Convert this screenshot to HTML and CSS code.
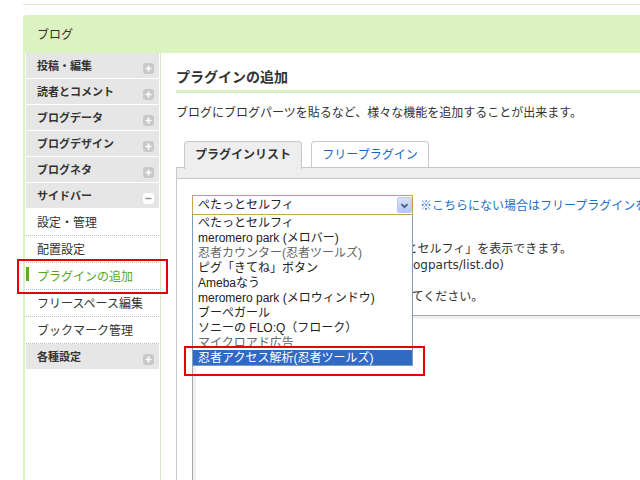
FILE: index.html
```html
<!DOCTYPE html>
<html lang="ja">
<head>
<meta charset="utf-8">
<title>プラグインの追加</title>
<link rel="stylesheet" href="styles.css">
</head>
<body>
<div class="topline"></div>
<div class="panel">
  <div class="panel-head">ブログ</div>
  <div class="panel-body">
    <nav class="side">
      <div class="cat">投稿・編集<svg class="tog" width="11" height="11" viewBox="0 0 11 11"><rect width="11" height="11" rx="3" fill="#c9c9c9"/><path d="M2.5 5.5h6M5.5 2.5v6" stroke="#fff" stroke-width="1.6"/></svg></div>
      <div class="cat">読者とコメント<svg class="tog" width="11" height="11" viewBox="0 0 11 11"><rect width="11" height="11" rx="3" fill="#c9c9c9"/><path d="M2.5 5.5h6M5.5 2.5v6" stroke="#fff" stroke-width="1.6"/></svg></div>
      <div class="cat">ブログデータ<svg class="tog" width="11" height="11" viewBox="0 0 11 11"><rect width="11" height="11" rx="3" fill="#c9c9c9"/><path d="M2.5 5.5h6M5.5 2.5v6" stroke="#fff" stroke-width="1.6"/></svg></div>
      <div class="cat">ブログデザイン<svg class="tog" width="11" height="11" viewBox="0 0 11 11"><rect width="11" height="11" rx="3" fill="#c9c9c9"/><path d="M2.5 5.5h6M5.5 2.5v6" stroke="#fff" stroke-width="1.6"/></svg></div>
      <div class="cat">ブログネタ<svg class="tog" width="11" height="11" viewBox="0 0 11 11"><rect width="11" height="11" rx="3" fill="#c9c9c9"/><path d="M2.5 5.5h6M5.5 2.5v6" stroke="#fff" stroke-width="1.6"/></svg></div>
      <div class="cat">サイドバー<svg class="tog" width="11" height="11" viewBox="0 0 11 11"><rect width="11" height="11" rx="3" fill="#fff"/><path d="M2.5 5.5h6" stroke="#8a8a8a" stroke-width="1.4"/></svg></div>
      <a class="sub">設定・管理</a>
      <a class="sub">配置設定</a>
      <a class="sub active">プラグインの追加</a>
      <a class="sub">フリースペース編集</a>
      <a class="sub">ブックマーク管理</a>
      <div class="cat">各種設定<svg class="tog" width="11" height="11" viewBox="0 0 11 11"><rect width="11" height="11" rx="3" fill="#c9c9c9"/><path d="M2.5 5.5h6M5.5 2.5v6" stroke="#fff" stroke-width="1.6"/></svg></div>
    </nav>
    <main class="main">
      <h1 class="title">プラグインの追加</h1>
      <p class="desc">ブログにブログパーツを貼るなど、様々な機能を追加することが出来ます。</p>
      <div class="tabs">
        <span class="tab on">プラグインリスト</span>
        <span class="tab">フリープラグイン</span>
      </div>
      <div class="tabpanel">
        <div class="strip"></div>
        <div class="tabbody">
          <div class="selrow">
            <div class="select">ぺたっとセルフィ<span class="arrow"><svg width="15" height="15" viewBox="0 0 15 15"><path d="M4 6l3.5 3.5L11 6" fill="none" stroke="#465a86" stroke-width="2"/></svg></span>
              <ul class="list">
                <li>ぺたっとセルフィ</li>
                <li>meromero park (メロバー)</li>
                <li class="dim">忍者カウンター(忍者ツールズ)</li>
                <li>ピグ「きてね」ボタン</li>
                <li>Amebaなう</li>
                <li>meromero park (メロウィンドウ)</li>
                <li>ブーペガール</li>
                <li>ソニーの FLO:Q（フローク）</li>
                <li class="dim">マイクロアド広告</li>
                <li class="sel">忍者アクセス解析(忍者ツールズ)</li>
              </ul>
            </div>
            <a class="note">※こちらにない場合はフリープラグインをご利用ください。</a>
          </div>
          <div class="info">
            <p>このプラグインを追加すると、「ぺたっとセルフィ」を表示できます。</p>
            <p>詳細はこちら(http://selfy.petatto.jp/blogparts/list.do)</p>
            <p class="gap">追加後は「配置設定」から位置を設定してください。</p>
          </div>
          <div class="preview"></div>
        </div>
      </div>
    </main>
  </div>
</div>
<div class="mark mark-side"></div>
<div class="mark mark-list"></div>
</body>
</html>
```
FILE: styles.css
```css
html, body {
  margin: 0;
  padding: 0;
  overflow: hidden;
}
body {
  width: 640px;
  height: 480px;
  position: relative;
  background: #fff;
  color: #333;
  font-family: "Liberation Sans", "Noto Sans CJK JP", sans-serif;
}
.topline {
  height: 1px;
  margin: 4px 0 0 23px;
  background: #dcefc6;
}
.panel {
  margin: 10px 0 0 23px;
  width: 680px;
}
.panel-head {
  height: 36px;
  line-height: 36px;
  padding: 2px 0 0 14px;
  font-size: 12px;
  color: #333;
  background: #dcf2c1;
  border-radius: 4px 0 0 0;
}
.panel-body {
  display: flex;
  height: 430px;
  border-left: 2px solid #dcf2c1;
}
.side {
  width: 133px;
  padding: 0 1px;
  border-right: 1px solid #d9ebc6;
  flex: none;
}
.cat {
  height: 23px;
  line-height: 23px;
  padding: 2px 5px 0 11px;
  border-bottom: 1px solid #fff;
  background: #e6e6e6;
  font-size: 11px;
  font-weight: bold;
  color: #333;
  display: flex;
  justify-content: space-between;
  align-items: center;
}
.tog {
  margin-top: 4px;
  display: block;
}
.sub {
  display: block;
  position: relative;
  height: 24px;
  line-height: 24px;
  padding: 2px 0 0 11px;
  border-bottom: 1px dotted #bdbdbd;
  font-size: 12px;
  color: #333;
}
.sub.active {
  color: #56a824;
}
.sub.active::before {
  content: "";
  position: absolute;
  left: 0;
  top: 4px;
  width: 3px;
  height: 14px;
  background: #5aab2c;
}
.main {
  flex: 1;
  padding: 14px 0 0 15px;
}
.title {
  margin: 0;
  font-size: 14px;
  font-weight: bold;
  line-height: 20px;
  padding-bottom: 3px;
  border-bottom: 3px solid #d9f0c2;
  color: #333;
}
.desc {
  margin: 12px 0 0;
  font-size: 12px;
  line-height: 16px;
}
.tabs {
  margin-top: 20px;
  padding-left: 8px;
  display: flex;
  gap: 9px;
  align-items: flex-start;
  height: 26px;
}
.tab {
  box-sizing: border-box;
  width: 118px;
  height: 26px;
  line-height: 26px;
  text-align: center;
  font-size: 12px;
  color: #1b67c6;
  background: #fff;
  border: 1px solid #c8c8c8;
  border-bottom: none;
  border-radius: 4px 4px 0 0;
}
.tab.on {
  height: 28px;
  background: #eee;
  color: #333;
  font-weight: bold;
  position: relative;
  z-index: 1;
}
.tabpanel {
  border-left: 1px solid #c8c8c8;
  border-top: 1px solid #c8c8c8;
}
.strip {
  height: 10px;
  background: #eee;
  border-bottom: 1px solid #c8c8c8;
}
.tabbody {
  padding: 16px 0 0 15px;
}
.selrow {
  display: flex;
  align-items: center;
  gap: 7px;
  white-space: nowrap;
}
.select {
  position: relative;
  box-sizing: border-box;
  width: 221px;
  height: 20px;
  line-height: 19px;
  padding-left: 5px;
  border: 1px solid #c9a14f;
  font-size: 12px;
  color: #222;
  background: #fff;
  flex: none;
}
.arrow {
  position: absolute;
  right: 0;
  top: 1px;
  width: 15px;
  height: 16px;
  box-sizing: border-box;
  border: 1px solid #b9c9f0;
  border-radius: 2px;
  background: linear-gradient(#d5e0fb, #b7c8f4);
  display: flex;
  align-items: center;
  justify-content: center;
}
.arrow svg {
  display: block;
}
.list {
  position: absolute;
  left: -1px;
  top: 18px;
  z-index: 2;
  box-sizing: border-box;
  width: 221px;
  margin: 0;
  padding: 0;
  list-style: none;
  background: #fff;
  border: 1px solid #7f9db9;
  border-top-color: #c9a14f;
}
.list li {
  height: 15px;
  line-height: 16px;
  padding-left: 5px;
  font-size: 12px;
  color: #222;
  white-space: nowrap;
}
.list li.dim {
  color: #666;
}
.list li.sel {
  background: #316ac5;
  color: #fff;
}
.note {
  font-size: 12px;
  line-height: 16px;
  padding-top: 1px;
  color: #1e6cc6;
}
.info {
  margin-top: 26px;
  padding-left: 4px;
  font-family: "DejaVu Sans", "Noto Sans CJK JP", sans-serif;
  font-size: 12px;
  line-height: 16px;
  white-space: nowrap;
}
.info p {
  margin: 0;
}
.info p.gap {
  margin-top: 16px;
}
.preview {
  margin-top: 10px;
  width: 600px;
  height: 220px;
  border: 1px solid #a8a8a8;
  box-shadow: inset 3px 3px 0 #f0f0f0;
}
.mark {
  position: absolute;
  box-sizing: border-box;
  border: 2px solid #e60000;
  z-index: 5;
}
.mark-side {
  left: 17px;
  top: 259px;
  width: 151px;
  height: 35px;
}
.mark-list {
  left: 184px;
  top: 346px;
  width: 241px;
  height: 30px;
}
```
